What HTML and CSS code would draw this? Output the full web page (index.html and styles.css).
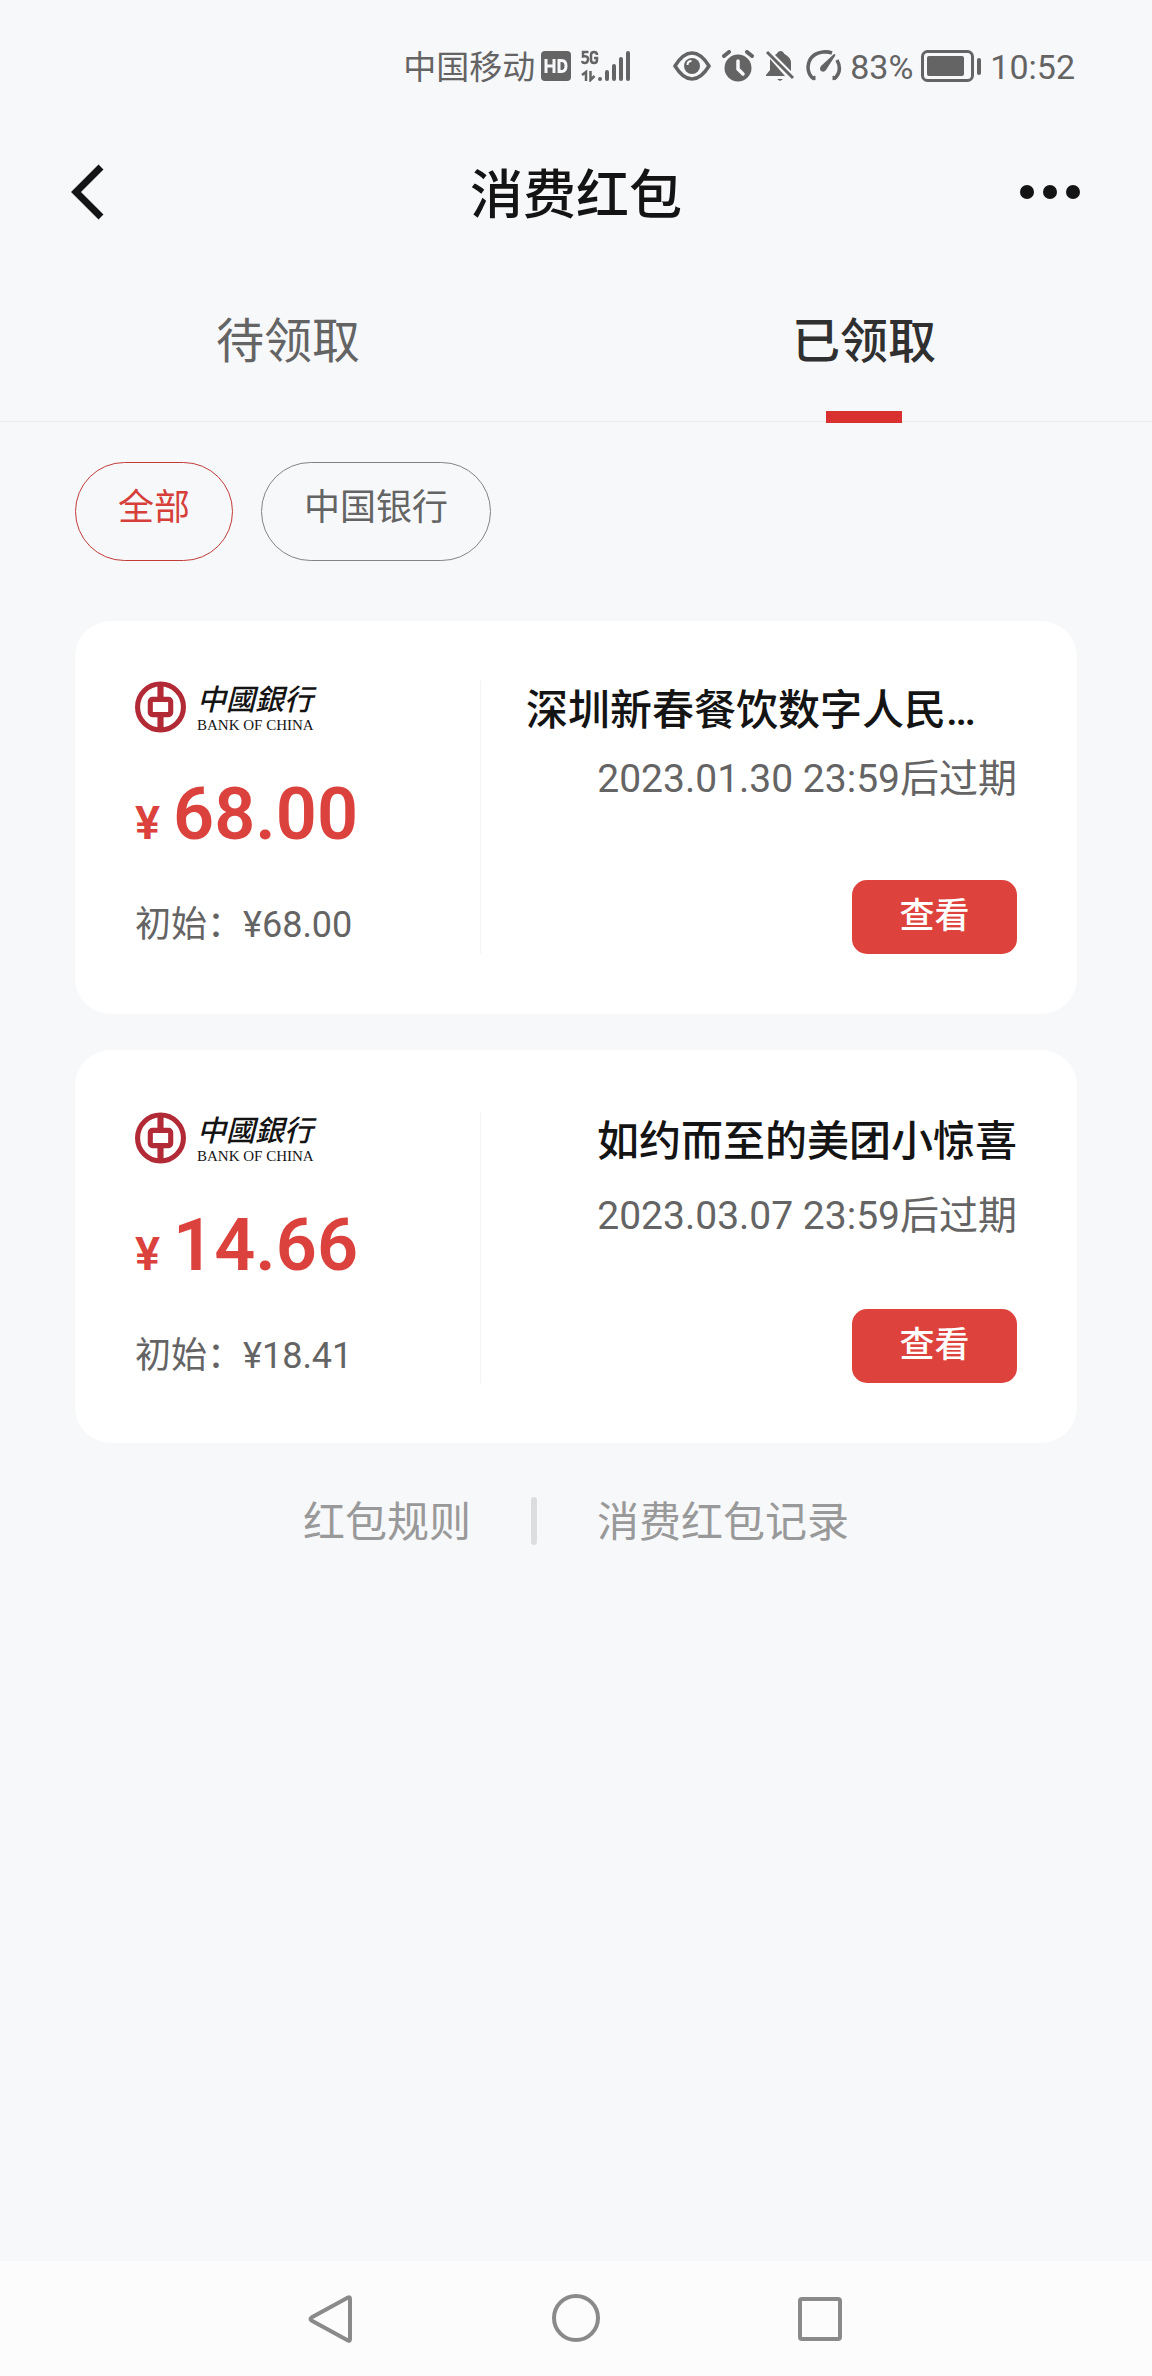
FILE: index.html
```html
<!DOCTYPE html>
<html lang="zh-CN">
<head>
<meta charset="utf-8">
<meta name="viewport" content="width=device-width, initial-scale=1">
<title>消费红包</title>
<link rel="stylesheet" href="styles.css">
</head>
<body>
<svg class="defs" aria-hidden="true">
  <symbol id="boc" viewBox="0 0 50 50">
    <circle cx="25" cy="25" r="22.500" fill="none" stroke="#b12a36" stroke-width="5"/>
    <path d="M25 3v14M25 34v14" stroke="#b12a36" stroke-width="6"/>
    <rect x="15" y="17.500" width="20" height="15" rx="2" fill="none" stroke="#b12a36" stroke-width="5"/>
  </symbol>
</svg>

<div class="status">
  <span class="carrier">中国移动</span>
  <svg class="hd" viewBox="0 0 30 30" role="img" aria-label="HD">
    <rect width="30" height="30" rx="4" fill="#646464"/>
    <path d="M5 8v14M13 8v14M5 15h8M18 9.500v11h2.500q4.500 0 4.500-5.500t-4.500-5.500z" fill="none" stroke="#f7f8fa" stroke-width="3"/>
  </svg>
  <svg class="signal" viewBox="0 0 50 32" role="img" aria-label="5G">
    <g fill="none" stroke="#646464" stroke-width="2.500">
      <path d="M7.500 2H2v4.500q5-1 5 2.500 0 4-3.500 4-2 0-2.500-2M16 5q0-3-3-3t-3 3v5q0 3 3 3t3-3V8h-3"/>
      <path d="M1 25l4-3v9M9.500 21v9l4-4"/>
    </g>
    <g stroke="#646464" stroke-width="4" stroke-linecap="round">
      <path d="M19 29v.1M26 22v7M33 16v13M40 9v20M47 3v26"/>
    </g>
  </svg>
  <svg class="eye" viewBox="0 0 38 30" aria-hidden="true">
    <path d="M2 15Q10 2 19 2t17 13Q28 28 19 28T2 15z" fill="none" stroke="#646464" stroke-width="3.500"/>
    <circle cx="19" cy="15" r="8" fill="#646464"/>
    <path d="M14.500 14q0-4 4-4" fill="none" stroke="#f7f8fa" stroke-width="2"/>
  </svg>
  <svg class="glyph" viewBox="0 0 32 32" aria-hidden="true">
    <circle cx="16" cy="18" r="13.500" fill="#646464"/>
    <path d="M2 6l5-4M30 6l-5-4" stroke="#646464" stroke-width="4" stroke-linecap="round"/>
    <path d="M16 11v8l5 5" fill="none" stroke="#f7f8fa" stroke-width="3.500" stroke-linecap="round"/>
  </svg>
  <svg class="glyph" viewBox="0 0 32 32" aria-hidden="true">
    <path d="M6 9v11l-4 5v1h19zM11 5q2-1 3-3 3-2 5 0 1 2 3 3 5 3 5 8v8z" fill="#646464"/>
    <path d="M3 2l26 26" stroke="#646464" stroke-width="3"/>
    <path d="M13 29h6l-3 2z" fill="#646464"/>
  </svg>
  <svg class="gauge" viewBox="0 0 36 32" aria-hidden="true">
    <path d="M8 29Q2 25 2 17 3 4 17 2q5-.5 9 1M31 10q6 11-3 19" fill="none" stroke="#646464" stroke-width="3.500"/>
    <path d="M28 4q2 0 1 2l-9 14q-2 3-5 1-2-2 0-5z" fill="#646464"/>
    <path d="M5 28l4-2v4zM31 28l-4-2v4z" fill="#646464" stroke="#646464"/>
  </svg>
  <span class="battery-level">83%</span>
  <svg class="battery" viewBox="0 0 61 32" aria-hidden="true">
    <rect x="1.500" y="1.500" width="50" height="29" rx="5" fill="none" stroke="#646464" stroke-width="3"/>
    <rect x="6" y="6" width="37" height="20" rx="2" fill="#646464"/>
    <rect x="56" y="8" width="4" height="17" rx="2" fill="#646464"/>
  </svg>
  <time class="clock">10:52</time>
</div>

<header class="titlebar">
  <button class="icon-button" type="button" aria-label="返回">
    <svg class="back" viewBox="0 0 34 56" aria-hidden="true"><path d="M31 3L6 28l25 25" fill="none" stroke="#141414" stroke-width="7"/></svg>
  </button>
  <h1 class="title">消费红包</h1>
  <button class="icon-button" type="button" aria-label="更多">
    <svg class="more" viewBox="0 0 62 14" aria-hidden="true"><g fill="#141414"><circle cx="7" cy="7" r="7"/><circle cx="30" cy="7" r="7"/><circle cx="53" cy="7" r="7"/></g></svg>
  </button>
</header>

<nav class="tabs">
  <a class="tab" href="#pending">待领取</a>
  <a class="tab tab-active" href="#claimed" aria-current="page">已领取</a>
</nav>

<main class="content">
  <div class="chips">
    <button class="chip chip-active" type="button">全部</button>
    <button class="chip" type="button">中国银行</button>
  </div>

  <div class="cards">
    <article class="card">
      <div class="card-left">
        <div class="bank">
          <svg class="bank-mark" aria-hidden="true"><use href="#boc"/></svg>
          <div class="bank-names">
            <span class="bank-cn">中國銀行</span>
            <span class="bank-en">BANK OF CHINA</span>
          </div>
        </div>
        <p class="amount"><span class="yen">¥</span>68.00</p>
        <p class="initial">初始：¥68.00</p>
      </div>
      <div class="card-right">
        <h2 class="card-title card-title-long">深圳新春餐饮数字人民…</h2>
        <p class="expiry">2023.01.30 23:59后过期</p>
        <button class="view" type="button">查看</button>
      </div>
    </article>

    <article class="card card-short">
      <div class="card-left">
        <div class="bank">
          <svg class="bank-mark" aria-hidden="true"><use href="#boc"/></svg>
          <div class="bank-names">
            <span class="bank-cn">中國銀行</span>
            <span class="bank-en">BANK OF CHINA</span>
          </div>
        </div>
        <p class="amount"><span class="yen">¥</span>14.66</p>
        <p class="initial">初始：¥18.41</p>
      </div>
      <div class="card-right">
        <h2 class="card-title">如约而至的美团小惊喜</h2>
        <p class="expiry">2023.03.07 23:59后过期</p>
        <button class="view" type="button">查看</button>
      </div>
    </article>
  </div>

  <div class="links">
    <a class="link" href="#rules">红包规则</a>
    <span class="separator"></span>
    <a class="link" href="#records">消费红包记录</a>
  </div>
</main>

<footer class="navbar">
  <div class="navkeys">
    <button class="icon-button" type="button" aria-label="后退"><svg class="key" viewBox="0 0 50 50" aria-hidden="true"><path d="M43 3.500Q45 2.500 45 5v40q0 2.500-2 1.500L6.500 26.500Q4.500 25 6.500 23.500z" fill="none" stroke="#8a8a8a" stroke-width="4"/></svg></button>
    <button class="icon-button" type="button" aria-label="主页"><svg class="key" viewBox="0 0 50 50" aria-hidden="true"><circle cx="25" cy="24" r="22" fill="none" stroke="#8a8a8a" stroke-width="4"/></svg></button>
    <button class="icon-button" type="button" aria-label="最近任务"><svg class="key" viewBox="0 0 50 50" aria-hidden="true"><rect x="3" y="5" width="40" height="40" rx="2" fill="none" stroke="#8a8a8a" stroke-width="4"/></svg></button>
  </div>
</footer>
</body>
</html>
```
FILE: styles.css
```css
* { box-sizing: border-box; }

body {
  margin: 0;
  min-height: 100vh;
  display: flex;
  flex-direction: column;
  background: #f7f8fa;
  color: #141414;
  font-family: Roboto, "Noto Sans CJK SC", sans-serif;
}

h1, h2, p { margin: 0; }
a { color: inherit; text-decoration: none; }
button { font: inherit; color: inherit; background: none; border: 0; padding: 0; cursor: pointer; }
svg { display: block; flex: none; }
.defs { position: absolute; width: 0; height: 0; }

/* Status bar */
.status {
  display: flex;
  align-items: center;
  justify-content: flex-end;
  height: 132px;
  padding: 0 77px;
  color: #646464;
  font-size: 34px;
  line-height: 40px;
}
.carrier { margin-right: 6px; padding-top: 4px; font-size: 33px; }
.battery-level, .clock { padding-top: 2px; }
.hd { width: 30px; height: 30px; margin-right: 10px; }
.signal { width: 50px; height: 32px; margin-right: 42px; }
.eye { width: 38px; height: 30px; margin-right: 11px; }
.glyph { width: 32px; height: 32px; margin-right: 10px; }
.gauge { width: 36px; height: 32px; margin-right: 8px; }
.battery { width: 61px; height: 32px; margin: 0 8px; }

/* Title bar */
.titlebar {
  display: flex;
  align-items: center;
  justify-content: space-between;
  height: 120px;
  padding: 0 70px;
}
.icon-button { display: flex; }
.titlebar .icon-button { width: 62px; }
.back { width: 34px; height: 56px; }
.more { width: 62px; height: 14px; }
.title { padding-top: 8px; font-size: 53px; line-height: 80px; font-weight: 500; }

/* Tabs */
.tabs {
  display: grid;
  grid-template-columns: 1fr 1fr;
  padding-top: 60px;
  border-bottom: 1px solid #ebecee;
}
.tab {
  display: flex;
  flex-direction: column;
  align-items: center;
  gap: 39px;
  color: #646464;
  font-size: 48px;
  line-height: 60px;
}
.tab-active { color: #303030; font-weight: 500; }
.tab::after { content: ""; width: 76px; height: 12px; margin-bottom: -2px; }
.tab-active::after { background: #d83130; }

/* Filter chips */
.content { flex: 1; padding: 40px 75px 0; }
.chips { display: flex; gap: 28px; }
.chip {
  height: 99px;
  padding: 0 42px 7px;
  border: 1px solid #838386;
  border-radius: 50px;
  color: #646464;
  font-size: 36px;
  line-height: 48px;
}
.chip-active { border-color: #c23c38; color: #d63f3a; }

/* Coupon cards */
.cards { display: grid; gap: 36px; padding-top: 60px; }
.card {
  display: grid;
  grid-template-columns: 346px 1fr;
  min-height: 393px;
  padding: 60px;
  border-radius: 36px;
  background: #fff;
}
.card-left { border-right: 1px solid #f3f4f6; }
.bank { display: flex; gap: 11px; height: 52px; }
.bank-mark { width: 51px; height: 52px; }
.bank-names { display: flex; flex-direction: column; gap: 4px; color: #141414; white-space: nowrap; }
.bank-cn {
  font-family: "Noto Sans CJK TC", sans-serif;
  font-size: 29px;
  font-style: italic;
  font-weight: 500;
  line-height: 32px;
}
.bank-en { font-family: "Liberation Serif", serif; font-size: 15px; line-height: 16px; }
.amount {
  padding-top: 40px;
  color: #dc423d;
  font-size: 72px;
  line-height: 84px;
  font-weight: 600;
}
.yen { margin-right: 13px; font-size: 47px; line-height: 48px; }
.initial { padding-top: 44px; color: #646464; font-size: 36px; line-height: 48px; }

.card-right { display: flex; flex-direction: column; align-items: flex-end; padding-left: 45px; }
.card-title { padding-top: 2px; font-size: 42px; line-height: 56px; font-weight: 500; }
.card-title-long { align-self: stretch; }
.expiry { padding-top: 12px; color: #646464; font-size: 39px; line-height: 56px; }
.card-short { padding-top: 62px; }
.card-short .expiry { padding-top: 18px; }
.view {
  width: 165px;
  height: 74px;
  margin-top: auto;
  border-radius: 15px;
  background: #de423c;
  color: #fff;
  font-size: 35px;
  line-height: 48px;
  font-weight: 500;
}

/* Footer links */
.links {
  display: flex;
  align-items: center;
  justify-content: center;
  gap: 60px;
  padding-top: 48px;
  color: #999;
  font-size: 42px;
  line-height: 56px;
}
.link { padding-top: 4px; }
.separator { width: 6px; height: 48px; border-radius: 3px; background: #dcdddf; }

/* System navigation */
.navbar { display: flex; justify-content: center; height: 115px; background: #fcfcfc; }
.navkeys { display: grid; grid-template-columns: repeat(3, 1fr); width: 64%; align-items: center; justify-items: center; }
.key { width: 50px; height: 50px; }
```
